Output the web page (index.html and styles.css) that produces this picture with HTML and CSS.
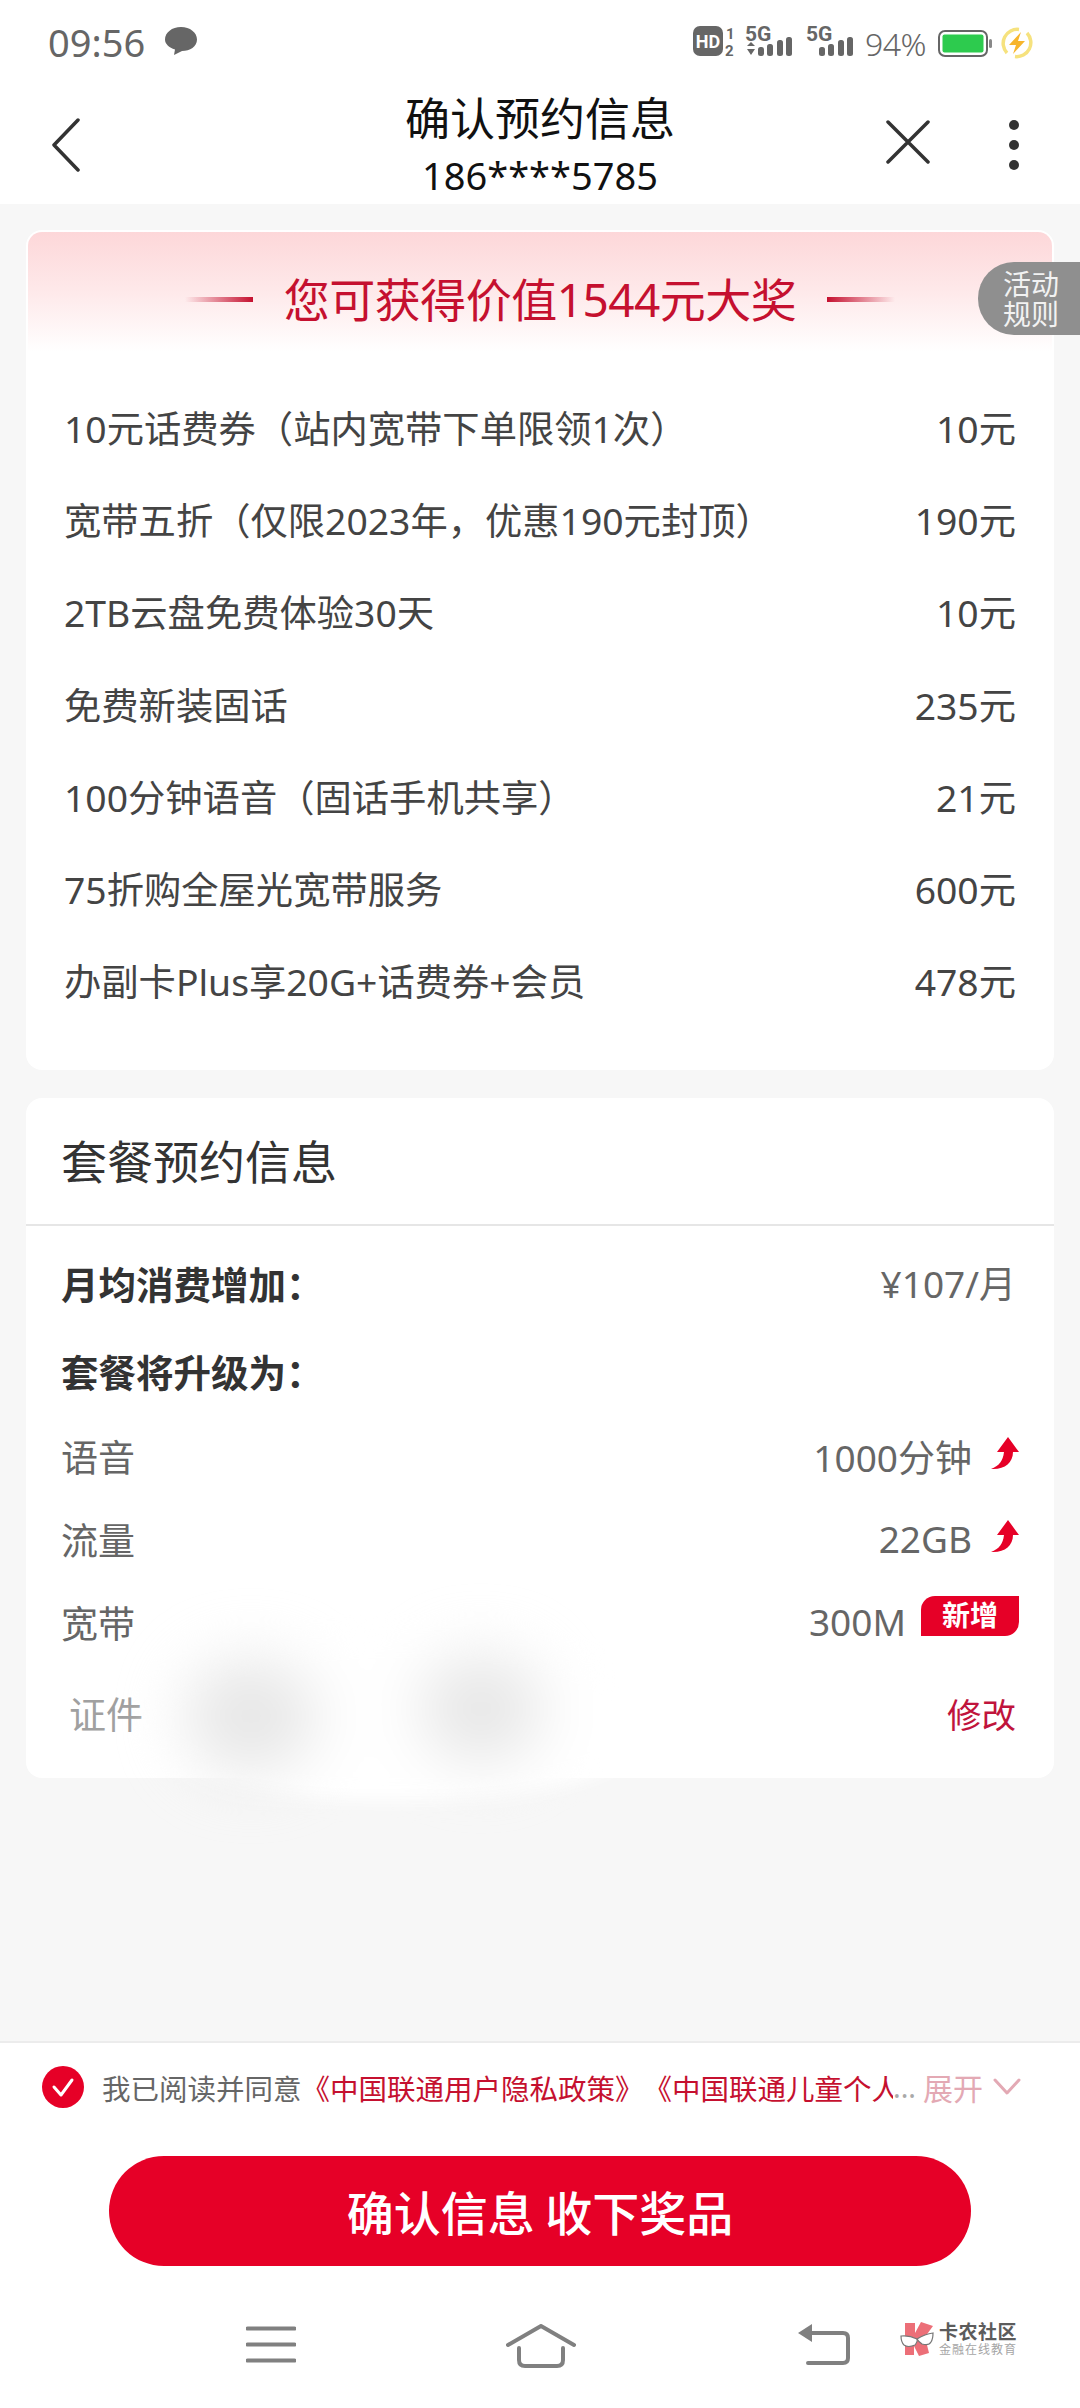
FILE: index.html
```html
<!DOCTYPE html>
<html lang="zh-CN">
<head>
<meta charset="utf-8">
<title>确认预约信息</title>
<link rel="stylesheet" href="styles.css">
</head>
<body>
<div class="page">
  <div class="status">
    <span class="time">09:56</span>
    <svg class="bubble" viewBox="0 0 32 28"><path d="M16 0C25 0 32 5.500 32 12.500C32 19.500 25 24 17 24L9 28L10 22.500C4 20.500 0 17 0 12.500C0 5.500 7 0 16 0Z"/></svg>
    <span class="status-gap"></span>
    <svg class="sb-hd" viewBox="0 -6 44 42">
      <rect width="30" height="30" rx="7" fill="#666"/>
      <text x="15" y="21.500" class="sb-hd-text" text-anchor="middle">HD</text>
      <text x="33" y="13" class="sb-small">1</text>
      <text x="32" y="30" class="sb-small">2</text>
    </svg>
    <svg class="sb-sig sb-sig-first" viewBox="0 -6 48 42">
      <text x="0" y="15" class="sb-5g">5G</text>
      <path d="M6 16L10 20H2ZM2 23H10L6 29Z" fill="#666"/>
      <rect x="13" y="21" width="6" height="9" rx="2.500" fill="#666"/>
      <rect x="22" y="18" width="6" height="12" rx="2.500" fill="#666"/>
      <rect x="32" y="14" width="6" height="16" rx="2.500" fill="#666"/>
      <rect x="41" y="11" width="6" height="19" rx="2.500" fill="#666"/>
    </svg>
    <svg class="sb-sig sb-sig-second" viewBox="0 -6 48 42">
      <text x="0" y="15" class="sb-5g">5G</text>
      <rect x="13" y="21" width="6" height="9" rx="2.500" fill="#666"/>
      <rect x="22" y="18" width="6" height="12" rx="2.500" fill="#666"/>
      <rect x="32" y="14" width="6" height="16" rx="2.500" fill="#666"/>
      <rect x="41" y="11" width="6" height="19" rx="2.500" fill="#666"/>
    </svg>
    <span class="pct">94%</span>
    <svg class="battery" viewBox="0 0 54 27">
      <rect x="1" y="1" width="48" height="25" rx="6" fill="#fff" stroke="#666" stroke-width="2"/>
      <rect x="4.500" y="4.500" width="41" height="18" rx="2" fill="#2dcb4e"/>
      <rect x="51" y="9" width="3" height="9" rx="1.500" fill="#888"/>
    </svg>
    <svg class="bolt" viewBox="0 0 32 32">
      <path d="M6 26A14 14 0 0 1 18 2.500" fill="none" stroke="#f6e27e" stroke-width="3.500"/>
      <path d="M26 6A14 14 0 0 1 14 29.500" fill="none" stroke="#f6e27e" stroke-width="3.500"/>
      <path d="M20 5L8 18H15L12 27L24 14H17Z" fill="#f7b52c"/>
    </svg>
  </div>

  <header class="nav">
    <svg class="nav-back" viewBox="0 0 30 54"><path d="M27 2L3 27L27 52" fill="none" stroke="#333" stroke-width="3.500" stroke-linecap="round" stroke-linejoin="round"/></svg>
    <div class="nav-title">
      <div class="nav-name">确认预约信息</div>
      <div class="nav-phone">186****5785</div>
    </div>
    <div class="nav-actions">
      <svg class="nav-close" viewBox="0 0 44 44"><path d="M2 2L42 42M42 2L2 42" fill="none" stroke="#333" stroke-width="3.500" stroke-linecap="round"/></svg>
      <svg class="nav-more" viewBox="0 0 12 52"><circle cx="6" cy="6" r="5" fill="#333"/><circle cx="6" cy="26" r="5" fill="#333"/><circle cx="6" cy="46" r="5" fill="#333"/></svg>
    </div>
  </header>

  <main class="main">
    <section class="card prize">
      <div class="prize-head">
        <span class="deco deco-left"></span>
        <h2 class="prize-title">您可获得价值1544元大奖</h2>
        <span class="deco deco-right"></span>
      </div>
      <ul class="prize-list">
        <li class="prize-row"><span>10元话费券（站内宽带下单限领1次）</span><span>10元</span></li>
        <li class="prize-row"><span>宽带五折（仅限2023年，优惠190元封顶）</span><span>190元</span></li>
        <li class="prize-row"><span>2TB云盘免费体验30天</span><span>10元</span></li>
        <li class="prize-row"><span>免费新装固话</span><span>235元</span></li>
        <li class="prize-row"><span>100分钟语音（固话手机共享）</span><span>21元</span></li>
        <li class="prize-row"><span>75折购全屋光宽带服务</span><span>600元</span></li>
        <li class="prize-row"><span>办副卡Plus享20G+话费券+会员</span><span>478元</span></li>
      </ul>
    </section>

    <section class="card info">
      <h2 class="info-head">套餐预约信息</h2>
      <div class="info-body">
        <div class="info-row info-row-strong"><strong class="info-strong">月均消费增加：</strong><span class="info-value">¥107/月</span></div>
        <div class="info-row info-row-strong"><strong class="info-strong">套餐将升级为：</strong></div>
        <div class="info-row"><span class="info-label">语音</span><span class="info-value">1000分钟</span>
          <svg class="up" viewBox="0 0 28 33"><path d="M17 0L28 15H22C22 26 13 33 0 32C8 29 12 24 13 15H6Z"/></svg></div>
        <div class="info-row"><span class="info-label">流量</span><span class="info-value">22GB</span>
          <svg class="up" viewBox="0 0 28 33"><path d="M17 0L28 15H22C22 26 13 33 0 32C8 29 12 24 13 15H6Z"/></svg></div>
        <div class="info-row"><span class="info-label">宽带</span><span class="info-value">300M</span><span class="tag">新增</span></div>
        <div class="info-row info-row-doc"><span class="doc-label">证件</span><span class="doc-tick"></span><span class="doc-edit">修改</span></div>
      </div>
      <div class="smudge">
        <span class="smudge-spot smudge-spot-a"></span>
        <span class="smudge-spot smudge-spot-b"></span>
      </div>
    </section>
  </main>

  <footer class="foot">
    <div class="agree">
      <svg class="check" viewBox="0 0 42 42"><circle cx="21" cy="21" r="21" fill="#e60027"/><path d="M12 21L19 29L30 14" fill="none" stroke="#fff" stroke-width="3" stroke-linecap="round" stroke-linejoin="round"/></svg>
      <div class="agree-text">我已阅读并同意<span class="agree-link">《中国联通用户隐私政策》《中国联通儿童个人</span></div>
      <span class="agree-dots">...</span>
      <span class="agree-more">展开</span>
      <svg class="agree-chev" viewBox="0 0 28 18"><path d="M2 2L14 15L26 2" fill="none" stroke="#e3a9b4" stroke-width="3" stroke-linecap="round" stroke-linejoin="round"/></svg>
    </div>
    <button class="cta">确认信息 收下奖品</button>
    <nav class="sysnav">
      <svg class="sys-menu" viewBox="0 0 50 37"><path d="M1.500 2.500H48.500M1.500 18.500H48.500M1.500 34.500H48.500" fill="none" stroke="#808080" stroke-width="4" stroke-linecap="round"/></svg>
      <svg class="sys-home" viewBox="0 0 70 44"><path d="M2 21L35 2L68 21" fill="none" stroke="#808080" stroke-width="4" stroke-linecap="round" stroke-linejoin="round"/><path d="M13 24V36Q13 42 19 42H51Q57 42 57 36V24" fill="none" stroke="#808080" stroke-width="4" stroke-linecap="round"/></svg>
      <svg class="sys-back" viewBox="0 0 52 41"><path d="M0 9L14 0V18Z" fill="#808080"/><path d="M12 9H45Q50 9 50 14V34Q50 39 45 39H10" fill="none" stroke="#808080" stroke-width="4" stroke-linecap="round"/></svg>
    </nav>
    <div class="logo">
      <svg class="logo-mark" viewBox="0 0 34 34">
        <path d="M5 1H15V11L21 0L33 4L25 15L29 31L19 34L14 24V33H5Z" fill="#ec6f78"/>
        <path d="M1 14Q9 13 17 17Q18 19 15 23Q8 26 4 23Q1 20 1 14Z" fill="#fff" stroke="#777" stroke-width="1.200"/>
        <path d="M33 11Q25 12 17 17Q18 19 22 22Q29 24 31 20Q33 17 33 11Z" fill="#fff" stroke="#777" stroke-width="1.200"/>
      </svg>
      <div class="logo-text">
        <div class="logo-name">卡农社区</div>
        <div class="logo-sub">金融在线教育</div>
      </div>
    </div>
  </footer>

  <aside class="rules">活动<br>规则</aside>
</div>
</body>
</html>
```

FILE: styles.css
```css
* { box-sizing: border-box; }
html, body { margin: 0; padding: 0; }
body { font-family: "Noto Sans", "Noto Sans CJK SC", sans-serif; background: #f7f7f7; color: #333; text-spacing-trim: space-all; }
h2, ul { margin: 0; padding: 0; font-weight: 400; }
ul { list-style: none; }

.page { position: relative; width: 1080px; height: 2408px; display: flex; flex-direction: column; overflow: hidden; }

/* status bar */
.status { height: 84px; background: #fff; display: flex; align-items: center; padding: 0 47px 0 48px; flex: none; }
.time { font-size: 38px; color: #666; line-height: 1; width: 100px; margin-top: -1px; }
.bubble { width: 32px; height: 28px; fill: #666; margin-left: 17px; margin-top: -2px; }
.status-gap { flex: 1; }
.sb-hd { width: 44px; height: 42px; margin-top: -2px; }
.sb-hd-text { font: 700 18px "Roboto", sans-serif; fill: #fff; }
.sb-small { font: 700 15px "Roboto", sans-serif; fill: #666; }
.sb-5g { font: 700 21px "Roboto", sans-serif; fill: #666; }
.sb-sig { width: 48px; height: 42px; margin-top: -2px; }
.sb-sig-first { margin-left: 8px; }
.sb-sig-second { margin-left: 13px; }
.pct { font-size: 32px; font-weight: 300; color: #666; margin-left: 11px; line-height: 1; width: 62px; white-space: nowrap; letter-spacing: -.5px; margin-top: 3px; }
.battery { width: 54px; height: 27px; margin-left: 11px; margin-top: 3px; }
.bolt { width: 32px; height: 32px; margin-left: 9px; margin-top: 1px; }

/* header */
.nav { height: 120px; background: #fff; flex: none; display: grid; grid-template-columns: 1fr auto 1fr; padding: 5px 0 0; }
.nav-back { width: 30px; height: 54px; margin: 29px 0 0 51px; }
.nav-title { text-align: center; color: #111; }
.nav-name { font-size: 45px; line-height: 60px; }
.nav-phone { font-size: 38px; line-height: 52px; }
.nav-actions { display: flex; justify-content: flex-end; padding-right: 60px; }
.nav-close { width: 44px; height: 44px; margin: 31px 78px 0 0; }
.nav-more { width: 12px; height: 52px; margin-top: 30px; }

/* main */
.main { flex: 1; padding: 26px 26px 0; display: flex; flex-direction: column; gap: 28px; }
.card { background: #fff; border-radius: 16px; position: relative; }

.prize { height: 840px; padding: 2px; }
.prize-head { height: 120px; padding-top: 14px; display: flex; justify-content: center; align-items: center; gap: 31px; border-radius: 14px 14px 0 0; background: linear-gradient(180deg, #fdd7d9 0%, #fee9ea 50%, #fff 100%); }
.prize-title { font-size: 46px; color: #c5102f; font-weight: 400; line-height: 60px; white-space: nowrap; letter-spacing: -.5px; }
.deco { width: 68px; height: 5px; }
.deco-left { background: linear-gradient(90deg, rgba(197,16,47,0), #c5102f); }
.deco-right { background: linear-gradient(90deg, #c5102f, rgba(197,16,47,0)); }
.prize-list { padding: 29px 36px 0; }
.prize-row { height: 92.200px; display: flex; justify-content: space-between; align-items: center; font-size: 37.300px; color: #444; }

.info { height: 680px; }
.info-head { height: 128px; padding: 2px 0 0 35px; font-size: 46px; line-height: 122px; border-bottom: 2px solid #e6e6e6; color: #333; }
.info-body { padding: 12px 36px 0 35px; }
.info-row { height: 83px; display: flex; align-items: center; font-size: 37px; padding-right: 2px; }
.info-row-strong { height: 88px; }
.info-strong { font-weight: 700; color: #333; margin-right: auto; font-size: 37.500px; }
.info-label { margin-right: auto; color: #666; }
.info-value { color: #666; }
.up { width: 28px; height: 33px; fill: #e60027; margin: -5px -3px 0 19px; flex: none; }
.tag { width: 98px; height: 40px; background: #e60027; color: #fff; font-size: 28px; font-weight: 700; line-height: 38px; text-align: center; border-radius: 14px 0 14px 0; margin: -12px -3px 0 15px; flex: none; }
.info-row-doc { height: 100px; padding: 0 2px 0 8px; position: relative; }
.doc-label { color: #a0a0a0; }
.doc-tick { width: 8px; height: 3px; background: #444; transform: rotate(-45deg); margin: -16px auto 0 46px; }
.doc-edit { color: #c0143c; font-size: 34.500px; }

.smudge { position: absolute; left: 125px; top: 538px; width: 500px; height: 164px; background: #fff; border-radius: 50% 50% 45% 45%; filter: blur(9px); }
.smudge-spot { position: absolute; border-radius: 50%; background: #e6e6e6; filter: blur(30px); }
.smudge-spot-a { left: 35px; top: 25px; width: 130px; height: 110px; }
.smudge-spot-b { left: 270px; top: 20px; width: 120px; height: 105px; }

/* footer */
.foot { height: 367px; flex: none; background: #fff; border-top: 2px solid #ececec; position: relative; display: flex; flex-direction: column; }
.agree { height: 84px; padding: 0 0 0 42px; display: flex; align-items: center; margin-top: 2px; font-size: 28.500px; flex: none; }
.check { width: 42px; height: 42px; flex: none; }
.agree-text { width: 791px; margin-left: 18px; overflow: hidden; white-space: nowrap; color: #666; }
.agree-link { color: #c5102f; }
.agree-dots { color: #a9a9a9; width: 30px; }
.agree-more { color: #e3a9b4; width: 62px; white-space: nowrap; font-size: 30px; }
.agree-chev { width: 28px; height: 18px; margin-left: 8px; }
.cta { width: 862px; height: 110px; margin: 27px 0 0 109px; border: 0; padding: 0 0 2px; border-radius: 55px; background: #e60027; color: #fff; font: 500 47px "Noto Sans CJK SC", sans-serif; flex: none; }
.sysnav { flex: 1; display: flex; align-items: flex-start; padding: 58px 0 0 246px; }
.sys-menu { width: 50px; height: 37px; margin-top: 2px; }
.sys-home { width: 70px; height: 44px; margin-left: 210px; }
.sys-back { width: 52px; height: 41px; margin-left: 222px; }

.logo { position: absolute; left: 900px; top: 279px; display: flex; gap: 5px; }
.logo-mark { width: 34px; height: 34px; }
.logo-text { color: #666; }
.logo-name { font-size: 19px; line-height: 21px; font-weight: 700; white-space: nowrap; letter-spacing: .5px; color: #5c5c5c; }
.logo-sub { font-size: 12px; line-height: 13px; color: #a5a5a5; white-space: nowrap; letter-spacing: 1px; }

.rules { position: absolute; right: 0; top: 262px; width: 102px; height: 73px; padding: 7px 0 0 25px; border-radius: 36px 0 0 36px; background: #8f8f8f; color: #f2f2f2; font-size: 28px; line-height: 30px; white-space: nowrap; }
```
